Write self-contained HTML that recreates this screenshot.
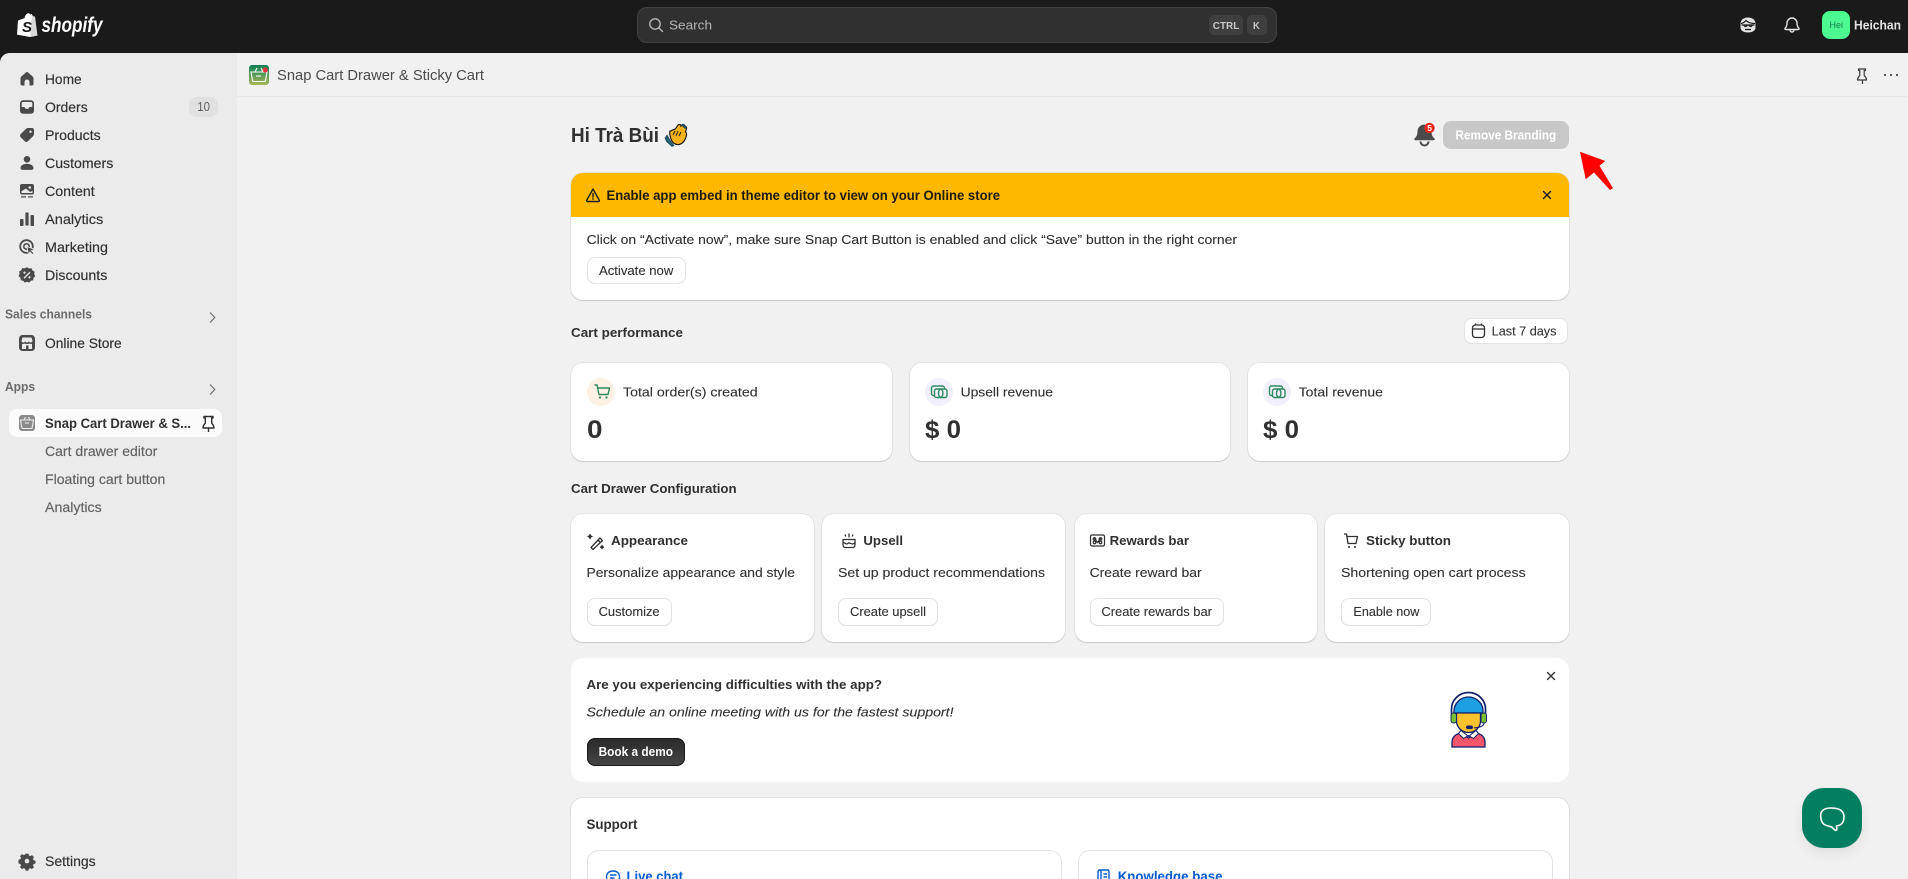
<!DOCTYPE html>
<html lang="en"><head><meta charset="utf-8"><title>Snap Cart Drawer &amp; Sticky Cart</title>
<style>
html,body{margin:0;padding:0;width:1908px;height:879px;overflow:hidden;background:#f1f1f1;font-family:"Liberation Sans",sans-serif}
#root{position:relative;width:1908px;height:879px;overflow:hidden;background:#1a1a1a}
.b{position:absolute;box-sizing:border-box}
.card{background:#fff;border-radius:12px;box-shadow:0 0 0 1px rgba(0,0,0,.05),0 1px 1px rgba(0,0,0,.12)}
.btn{background:#fff;border-radius:8px;box-shadow:inset 0 0 0 1px #e3e3e3,inset 0 -1px 0 #bdbdbd}
svg.o{position:absolute;left:0;top:0}
text{font-family:"Liberation Sans",sans-serif;font-size:13.3px;fill:#303030}
.n{font-size:13.6px;fill:#303030;stroke:#303030;stroke-width:.15px}
.s{fill:#616161;stroke:#616161}
.t{font-weight:700;font-size:13px;fill:#303030}
.d{font-size:13.3px;fill:#303030;stroke:#303030;stroke-width:.1px}
.c{font-size:12.5px;fill:#303030;stroke:#303030;stroke-width:.1px}
.v{font-weight:700;font-size:25px;fill:#303030}
.l{font-weight:700;font-size:13.5px;fill:#005bd3}
</style></head><body>
<div id="root">
<div class="b" style="left:0;top:53px;width:1908px;height:826px;background:#f1f1f1;border-radius:10px 0 0 0;overflow:hidden">
  <div class="b" style="left:0;top:0;width:237px;height:826px;background:#ebebeb"></div>
  <div class="b" style="left:237px;top:43px;width:1671px;height:1px;background:#e8e8e8"></div>
</div>
<div class="b" style="left:637px;top:7px;width:640px;height:36px;background:#303030;border:1px solid #424242;border-radius:10px"></div>
<div class="b" style="left:1209px;top:15px;width:34px;height:20px;background:#3f3f3f;border-radius:5px"></div>
<div class="b" style="left:1247px;top:15px;width:20px;height:20px;background:#3f3f3f;border-radius:5px"></div>
<div class="b" style="left:1822px;top:11px;width:28px;height:28px;background:#4dfa92;border-radius:8px"></div>
<div class="b" style="left:189px;top:97px;width:29px;height:20px;background:#e0e0e0;border-radius:8px"></div>
<div class="b" style="left:9px;top:409px;width:213px;height:28px;background:#fbfbfb;border-radius:8px"></div>

<div class="b" style="left:1443px;top:121px;width:126px;height:28px;background:#c8c8c8;border-radius:8px"></div>

<div class="b card" style="left:571px;top:173px;width:998px;height:127px;overflow:hidden">
  <div class="b" style="left:0;top:0;width:998px;height:44px;background:#ffb800"></div>
</div>
<div class="b btn" style="left:587px;top:257px;width:99px;height:27px"></div>
<div class="b btn" style="left:1464px;top:318px;width:104px;height:26px"></div>

<div class="b card" style="left:571px;top:363px;width:321px;height:98px"></div>
<div class="b card" style="left:910px;top:363px;width:320px;height:98px"></div>
<div class="b card" style="left:1248px;top:363px;width:321px;height:98px"></div>

<div class="b card" style="left:571px;top:514px;width:243px;height:128px"></div>
<div class="b card" style="left:822px;top:514px;width:243px;height:128px"></div>
<div class="b card" style="left:1075px;top:514px;width:242px;height:128px"></div>
<div class="b card" style="left:1325px;top:514px;width:244px;height:128px"></div>
<div class="b btn" style="left:587px;top:598px;width:85px;height:28px"></div>
<div class="b btn" style="left:838px;top:598px;width:100px;height:28px"></div>
<div class="b btn" style="left:1090px;top:598px;width:134px;height:28px"></div>
<div class="b btn" style="left:1341px;top:598px;width:90px;height:28px"></div>

<div class="b" style="left:571px;top:658px;width:998px;height:124px;background:#fff;border-radius:12px"></div>
<div class="b" style="left:587px;top:738px;width:98px;height:28px;border-radius:8px;background:linear-gradient(#2a2a2a,#454545);box-shadow:0 0 0 1px #1a1a1a inset"></div>

<div class="b" style="left:571px;top:798px;width:998px;height:81px;background:#fff;border-radius:12px 12px 0 0;box-shadow:0 0 0 1px rgba(0,0,0,.075)"></div>
<div class="b" style="left:587px;top:850px;width:475px;height:60px;background:#fff;border:1px solid #e3e3e3;border-radius:12px"></div>
<div class="b" style="left:1078px;top:850px;width:475px;height:60px;background:#fff;border:1px solid #e3e3e3;border-radius:12px"></div>

<div class="b" style="left:1802px;top:788px;width:60px;height:60px;background:#037f60;border-radius:22px;box-shadow:0 6px 14px rgba(0,0,0,.07)"></div>

<svg class="o" width="1908" height="879" viewBox="0 0 1908 879" xmlns="http://www.w3.org/2000/svg">
<defs>
<linearGradient id="g" x1="0" y1="0" x2="0" y2="1"><stop offset="0" stop-color="#0d7f58"/><stop offset="1" stop-color="#a9b758"/></linearGradient>
</defs>

<!-- shopify logo -->
<path d="M18 20.5l6.5-2.4c.6-3 2.3-4.8 4-4.8.8 0 1.4.5 1.7 1.200l1.700-.5L37.500 35.500 30 37 17 34.600z" fill="#fff"/>
<path d="M32 14.600L30 37 37.500 35.500 35 16.500l-2-.4z" fill="#d8d8d8"/>
<text x="22" y="32" style="font-size:15px;font-weight:700;font-style:italic;fill:#1a1a1a">S</text>
<text x="41.500" y="32" textLength="61" lengthAdjust="spacingAndGlyphs" style="font-size:21px;font-weight:700;font-style:italic;fill:#fff">shopify</text>

<!-- top bar -->
<g fill="none" stroke="#b5b5b5" stroke-width="1.400"><circle cx="655" cy="24" r="5.200"/><path d="M659 28l3.500 3.500" stroke-linecap="round"/></g>
<text x="669" y="29.500" textLength="43" lengthAdjust="spacingAndGlyphs" style="font-size:13px;fill:#b5b5b5">Search</text>
<text x="1212.800" y="29" textLength="26.500" lengthAdjust="spacingAndGlyphs" style="font-size:10px;font-weight:700;fill:#c8c8c8">CTRL</text>
<text x="1253" y="29" textLength="6.800" lengthAdjust="spacingAndGlyphs" style="font-size:10px;font-weight:700;fill:#c8c8c8">K</text>

<g transform="translate(1738,15)">
<path d="M10 2.500c4.500 0 7.500 2.500 7.500 6.500v3.500c0 3-3 5-7.500 5s-7.500-2-7.500-5V9c0-4 3-6.500 7.500-6.500z" fill="#e3e3e3"/>
<path d="M3 8.500c3-.3 4-2 5-3 2 2 5 3 9 3" fill="none" stroke="#1a1a1a" stroke-width="1.200"/>
<path d="M3.500 10h13M6 10.500a1.800 1.800 0 0 0 3.200 0M11 10.500a1.800 1.800 0 0 0 3.200 0M7 14.500h6" fill="none" stroke="#1a1a1a" stroke-width="1.300"/>
</g>
<g transform="translate(1782,15)" fill="none" stroke="#e3e3e3" stroke-width="1.400" stroke-linejoin="round">
<path d="M10 3a5 5 0 0 0-5 5c0 2.500-.6 4-1.900 5.300-.4.400-.1 1.200.5 1.200h12.800c.6 0 .9-.8.5-1.200C15.600 12 15 10.500 15 8a5 5 0 0 0-5-5z"/><path d="M8 15a2 2 0 0 0 4 0"/>
</g>
<text x="1829.500" y="28" textLength="13.500" lengthAdjust="spacingAndGlyphs" style="font-size:9.500px;fill:#1c7a50">Hei</text>
<text x="1854" y="29.500" textLength="47" lengthAdjust="spacingAndGlyphs" style="font-size:12.500px;font-weight:700;fill:#e3e3e3">Heichan</text>

<!-- nav text -->
<text class="n" x="45" y="84" textLength="36.700" lengthAdjust="spacingAndGlyphs">Home</text>
<text class="n" x="45" y="112" textLength="42.700" lengthAdjust="spacingAndGlyphs">Orders</text>
<text class="n" x="45" y="140" textLength="55.700" lengthAdjust="spacingAndGlyphs">Products</text>
<text class="n" x="45" y="168" textLength="68.300" lengthAdjust="spacingAndGlyphs">Customers</text>
<text class="n" x="45" y="196" textLength="49.700" lengthAdjust="spacingAndGlyphs">Content</text>
<text class="n" x="45" y="224" textLength="58.300" lengthAdjust="spacingAndGlyphs">Analytics</text>
<text class="n" x="45" y="252" textLength="63" lengthAdjust="spacingAndGlyphs">Marketing</text>
<text class="n" x="45" y="280" textLength="62.300" lengthAdjust="spacingAndGlyphs">Discounts</text>
<text x="197.300" y="111" textLength="12.700" lengthAdjust="spacingAndGlyphs" style="font-size:12.500px;fill:#616161">10</text>
<text x="5" y="318.500" textLength="87" lengthAdjust="spacingAndGlyphs" style="font-size:12.500px;font-weight:700;fill:#6b6b6b">Sales channels</text>
<text class="n" x="45" y="348" textLength="76.700" lengthAdjust="spacingAndGlyphs">Online Store</text>
<text x="5" y="391" textLength="30" lengthAdjust="spacingAndGlyphs" style="font-size:12.500px;font-weight:700;fill:#6b6b6b">Apps</text>
<text x="45" y="428" textLength="146" lengthAdjust="spacingAndGlyphs" style="font-size:13.500px;font-weight:700;fill:#303030">Snap Cart Drawer &amp; S...</text>
<text class="n s" x="45" y="456" textLength="112.300" lengthAdjust="spacingAndGlyphs">Cart drawer editor</text>
<text class="n s" x="45" y="484" textLength="120.300" lengthAdjust="spacingAndGlyphs">Floating cart button</text>
<text class="n s" x="45" y="512" textLength="56.700" lengthAdjust="spacingAndGlyphs">Analytics</text>
<text class="n" x="45" y="866" textLength="50.700" lengthAdjust="spacingAndGlyphs">Settings</text>

<!-- nav icons -->
<g fill="#4a4a4a">
<path transform="translate(17,69)" d="M8.900 3.500a1.700 1.700 0 0 1 2.200 0l4.300 3.700c.7.600 1.100 1.500 1.100 2.400v5.400c0 .8-.7 1.500-1.500 1.500h-2.500v-3.500a2.500 2.500 0 0 0-5 0v3.500H5c-.8 0-1.500-.7-1.500-1.500V9.600c0-.9.400-1.800 1.100-2.400z"/>
<path transform="translate(17,97)" fill-rule="evenodd" d="M6 3.300h8a3 3 0 0 1 3 3v7.400a3 3 0 0 1-3 3H6a3 3 0 0 1-3-3V6.300a3 3 0 0 1 3-3zM6 5a1.300 1.300 0 0 0-1.300 1.300V10H7c.5 0 .9.300 1 .8.300.8 1 1.200 2 1.200s1.700-.4 2-1.200c.1-.5.500-.8 1-.8h2.300V6.300A1.300 1.300 0 0 0 14 5z"/>
<path transform="translate(17,125)" fill-rule="evenodd" d="M11 3h4a2 2 0 0 1 2 2v4a3 3 0 0 1-.9 2.100l-5.200 5.200a2.200 2.200 0 0 1-3.100 0l-4.100-4.100a2.200 2.200 0 0 1 0-3.100l5.200-5.200A3 3 0 0 1 11 3zm2.500 2.500a1.200 1.200 0 1 0 0 2.400 1.200 1.200 0 0 0 0-2.400z"/>
<path transform="translate(17,153)" d="M10 3a3.300 3.300 0 1 1 0 6.600A3.300 3.300 0 0 1 10 3zM10 10.800c3.700 0 6.500 1.900 6.500 4.200 0 1.100-.8 1.900-1.900 1.900H5.400C4.300 16.900 3.500 16.100 3.500 15c0-2.300 2.800-4.200 6.500-4.200z"/>
<path transform="translate(17,181)" fill-rule="evenodd" d="M5 3h10a2 2 0 0 1 2 2v6.500a2 2 0 0 1-2 2H5a2 2 0 0 1-2-2V5a2 2 0 0 1 2-2zm7.800 2.200a1.300 1.300 0 1 0 0 2.600 1.300 1.300 0 0 0 0-2.600zM4.500 10.200v1.300c0 .3.200.5.500.5h10c.3 0 .5-.2.500-.5V9.800L13 11l-4-3.500zM4 15.200h5v1.300H4zM11 15.200h5v1.300h-5z"/>
<path transform="translate(17,209)" d="M9 3.500h2c.4 0 .6.300.6.600v11.800c0 .4-.2.600-.6.600H9c-.4 0-.6-.2-.6-.6V4.100c0-.3.200-.6.600-.6zM14.400 6h1.700c.5 0 .9.400.9.900v9.200c0 .5-.4.900-.9.900h-1.700c-.5 0-.9-.4-.9-.9V6.900c0-.5.400-.9.900-.9zM3.900 10h1.700c.5 0 .9.400.9.900v5.200c0 .5-.4.900-.9.900H3.900c-.5 0-.9-.4-.9-.9v-5.200c0-.5.400-.9.900-.9z"/>
<g transform="translate(17,237)"><circle cx="9.500" cy="9.500" r="6.300" fill="none" stroke="#4a4a4a" stroke-width="1.800"/><circle cx="9.500" cy="9.500" r="2.700" fill="none" stroke="#4a4a4a" stroke-width="1.600"/><path d="M9.800 9.500l7.600 2.800-3 1.300 2.700 2.700-1.400 1.400-2.700-2.700-1.300 3z" stroke="#ebebeb" stroke-width=".8"/></g>
<path transform="translate(17,265)" fill-rule="evenodd" d="M10 2.300l2.100 1.200 2.400-.2 1 2.200 2.100 1.100-.4 2.400 1 2.200-1.700 1.700-.3 2.400-2.400.4-1.500 1.900-2.300-.8-2.300.8-1.500-1.900-2.400-.4-.3-2.400L1.600 11l1-2.200L2.200 6.400l2.100-1.100 1-2.200 2.400.2zM12.500 6.800l-6 6 .9.900 6-6zM7.500 6.500a1.100 1.100 0 1 0 0 2.200 1.100 1.100 0 0 0 0-2.200zM12.500 11.200a1.100 1.100 0 1 0 0 2.200 1.100 1.100 0 0 0 0-2.200z"/>
<path transform="translate(17,851)" fill-rule="evenodd" d="M8.600 2.600h2.800l.5 1.900 1.400.6 1.700-1 2 2-1 1.700.6 1.400 1.900.5v2.800l-1.900.5-.6 1.400 1 1.700-2 2-1.700-1-1.400.6-.5 1.900H8.600l-.5-1.900-1.400-.6-1.700 1-2-2 1-1.700-.6-1.400-1.900-.5V8.700l1.900-.5.6-1.400-1-1.700 2-2 1.700 1 1.400-.6zM10 7.800a2.300 2.300 0 1 0 0 4.600 2.300 2.300 0 0 0 0-4.600z"/>
<path transform="translate(17,333)" fill-rule="evenodd" d="M5.500 2h9A3.500 3.500 0 0 1 18 5.500v9a3.500 3.500 0 0 1-3.500 3.500h-9A3.500 3.500 0 0 1 2 14.500v-9A3.500 3.500 0 0 1 5.500 2zM5.500 4.500l-1 3.300c0 1 .9 1.700 1.800 1.700s1.800-.7 1.800-1.400c0 .7.800 1.400 1.900 1.400s1.900-.7 1.900-1.400c0 .7.900 1.400 1.800 1.400s1.800-.7 1.800-1.700l-1-3.300zM5 10.800V16h4v-3.500h2.500V16H15v-5.200c-.9.300-2 .1-2.700-.3-.7.400-1.500.5-2.300.5s-1.600-.1-2.300-.5c-.7.400-1.800.6-2.700.3z"/>
</g>
<path d="M210 312.500l4.800 5-4.800 5M210 384.500l4.800 5-4.800 5" fill="none" stroke="#6b6b6b" stroke-width="1.200"/>

<!-- active app icon -->
<rect x="19" y="415" width="16" height="16" rx="3" fill="#8a8a8a"/>
<g transform="translate(0,11)" fill="none" stroke="#ececec" stroke-width="1.100"><path d="M20.500 409h13l-1.300 7.500c-.1.600-.5 1-1 1h-8.400c-.5 0-.9-.4-1-1z"/><path d="M24 409l1.500-3M30 409l-1.500-3"/><path d="M25 412h4"/></g>
<g transform="translate(0,11)" fill="none" stroke="#303030" stroke-width="1.400" stroke-linejoin="round"><path d="M204.500 417h-1.500c0-2.600 1.500-3.800 2.300-4.800V407h-1.300v-1.500h9v1.500h-1.300v5.200c.8 1 2.300 2.200 2.300 4.800h-9.500zM208.500 417.500v3.500"/></g>

<!-- header -->
<rect x="249" y="65" width="20" height="20" rx="3" fill="url(#g)"/>
<g fill="none" stroke="#fff" stroke-width="1.100"><path d="M251 72h16l-1.500 8.500c-.1.600-.6 1-1.100 1h-10.800c-.5 0-1-.4-1.100-1z"/><path d="M255 72l2-4M263 72l-2-4"/><path d="M256 76h5"/></g>
<circle cx="265.300" cy="70" r="2.500" fill="#e8343a"/>
<text x="277" y="80" textLength="207" lengthAdjust="spacingAndGlyphs" style="font-size:14.500px;fill:#4a4a4a">Snap Cart Drawer &amp; Sticky Cart</text>
<g fill="none" stroke="#3a3a3a" stroke-width="1.200" stroke-linejoin="round"><path d="M1858.500 80h-1c0-2.500 1.500-3.500 2.300-4.500v-5h-1.300V69h7v1.500h-1.300v5c.8 1 2.300 2 2.300 4.500h-8zM1862.500 80.500v3.500"/></g>
<g fill="#4a4a4a"><circle cx="1885" cy="75" r="1.100"/><circle cx="1891" cy="75" r="1.100"/><circle cx="1897" cy="75" r="1.100"/></g>

<!-- greeting -->
<text x="571" y="142" textLength="88" lengthAdjust="spacingAndGlyphs" style="font-size:20px;font-weight:700;fill:#303030">Hi Trà Bùi</text>
<g>
<path d="M671 131c2-2 4-1 5-3l2-3c1-1 3-.5 3 1l1-1c1.500-1 3 0 3 1.500 1 0 2 1 1.500 2.300l-1 3c1 .8 1.200 2 1 3.200-.5 4-3 8.500-7.500 9.500-4 .5-7-2-8-5.500-.7-2.500-2-5-1-8z" fill="#f9b21a" stroke="#1f1f1f" stroke-width="1.200"/>
<path d="M667 135l4 7 3 3.500-2 1-5.500-5-1.500-3.500zM683 124l3.500 3.500-1.500 1-3.500-3.500z" fill="#22657c" stroke="#16323c" stroke-width=".6"/>
<path d="M675 131l-2 4M678 131l-2 5M681 132l-2 4" stroke="#1f1f1f" stroke-width="1" fill="none"/>
</g>

<!-- bell + remove branding -->
<path d="M1424.500 124.500a7 7 0 0 0-7 7c0 3-.9 5.300-3 7-.6.600-.2 1.700.7 1.700h18.600c.9 0 1.300-1.100.7-1.700-2.100-1.700-3-4-3-7a7 7 0 0 0-7-7z" fill="#4a4a4a"/>
<path d="M1420.500 141.500a4 4 0 0 0 8 0" fill="none" stroke="#4a4a4a" stroke-width="2"/>
<circle cx="1429.500" cy="128" r="5.200" fill="#e8261c"/>
<text x="1427.300" y="131" style="font-size:8.500px;font-weight:700;fill:#fff">5</text>
<text x="1455.500" y="139.500" textLength="100.700" lengthAdjust="spacingAndGlyphs" style="font-size:12.500px;font-weight:700;fill:#fff">Remove Branding</text>
<polygon points="1580,151.700 1605.300,161 1599.500,165.700 1613,188.300 1610,190 1594,172.500 1585.700,179.300" fill="#fe0000"/>

<!-- banner -->
<g fill="none" stroke="#1f1f1f" stroke-width="1.400" stroke-linejoin="round"><path d="M593 189l-6.300 11.300c-.3.600.1 1.200.7 1.200h11.200c.6 0 1-.6.700-1.200z"/><path d="M593 193.500v3.500M593 198.700v.6" stroke-linecap="round"/></g>
<text x="606.500" y="200" textLength="393.500" lengthAdjust="spacingAndGlyphs" style="font-size:13.500px;font-weight:700;fill:#1f1a0a">Enable app embed in theme editor to view on your Online store</text>
<path d="M1543.500 191.500l7 7M1550.500 191.500l-7 7" stroke="#1a1a1a" stroke-width="1.400" stroke-linecap="round"/>
<text class="d" x="586.600" y="244" textLength="650.400" lengthAdjust="spacingAndGlyphs">Click on “Activate now”, make sure Snap Cart Button is enabled and click “Save” button in the right corner</text>
<text class="c" x="599" y="275" textLength="74.300" lengthAdjust="spacingAndGlyphs">Activate now</text>

<!-- cart performance -->
<text class="t" x="571" y="337" textLength="112" lengthAdjust="spacingAndGlyphs">Cart performance</text>
<g fill="none" stroke="#303030" stroke-width="1.300"><rect x="1472.500" y="325" width="12" height="12.500" rx="3"/><path d="M1472.500 329h12M1475.500 323.500v1.500M1481.500 323.500v1.500"/></g>
<text class="c" x="1491.700" y="335.500" textLength="64.800" lengthAdjust="spacingAndGlyphs">Last 7 days</text>

<ellipse cx="601" cy="392" rx="14" ry="14" fill="#fdf1e4"/>
<g fill="none" stroke="#2e8a5f" stroke-width="1.400"><path d="M594.500 385h2.500l2 9.500h9l1.500-6.500h-12"/></g><circle cx="600" cy="397.500" r="1.100" fill="#2e8a5f"/><circle cx="606.500" cy="397.500" r="1.100" fill="#2e8a5f"/>
<text class="d" x="623" y="396.500" textLength="134.600" lengthAdjust="spacingAndGlyphs">Total order(s) created</text>
<text class="v" x="587" y="438" textLength="15.500" lengthAdjust="spacingAndGlyphs">0</text>

<ellipse cx="939" cy="392" rx="14" ry="14" fill="#f1f0fb"/>
<g fill="none" stroke="#2e8a5f" stroke-width="1.400"><rect x="931.500" y="386" width="13" height="9.500" rx="2"/><rect x="934.500" y="389" width="12.500" height="8.500" rx="2" fill="#f1f0fb"/><ellipse cx="940.700" cy="393.200" rx="2.200" ry="4"/></g>
<text class="d" x="960.600" y="396.500" textLength="92.400" lengthAdjust="spacingAndGlyphs">Upsell revenue</text>
<text class="v" x="925" y="438" textLength="36" lengthAdjust="spacingAndGlyphs">$ 0</text>

<ellipse cx="1277" cy="392" rx="14" ry="14" fill="#f1f0fb"/>
<g fill="none" stroke="#2e8a5f" stroke-width="1.400"><rect x="1269.500" y="386" width="13" height="9.500" rx="2"/><rect x="1272.500" y="389" width="12.500" height="8.500" rx="2" fill="#f1f0fb"/><ellipse cx="1278.700" cy="393.200" rx="2.200" ry="4"/></g>
<text class="d" x="1298.600" y="396.500" textLength="84.400" lengthAdjust="spacingAndGlyphs">Total revenue</text>
<text class="v" x="1263" y="438" textLength="36" lengthAdjust="spacingAndGlyphs">$ 0</text>

<!-- config -->
<text class="t" x="571" y="493" textLength="165.600" lengthAdjust="spacingAndGlyphs">Cart Drawer Configuration</text>

<g fill="none" stroke="#303030" stroke-width="1.300" stroke-linejoin="round"><path d="M591 547.500l9-9.500 2.500 2.500-9.500 9zM598 540l2.500 2.500M590 534.500l.5 1.500 1.500.5-1.500.5-.5 1.500-.5-1.500-1.500-.5 1.500-.5zM602 545.500l.4 1.200 1.200.4-1.200.4-.4 1.200-.4-1.200-1.200-.4 1.200-.4z"/></g>
<text class="t" x="611" y="545" textLength="77" lengthAdjust="spacingAndGlyphs">Appearance</text>
<text class="d" x="586.500" y="577" textLength="208.500" lengthAdjust="spacingAndGlyphs">Personalize appearance and style</text>
<text class="c" x="598.600" y="616" textLength="61" lengthAdjust="spacingAndGlyphs">Customize</text>

<g fill="none" stroke="#303030" stroke-width="1.300" stroke-linejoin="round"><path d="M843 539.500h12v5.500a2.500 2.500 0 0 1-2.500 2.500h-7a2.500 2.500 0 0 1-2.500-2.500zM843 543c1.500-1 2.500 1 3.500 1s2-1.500 3-1 2 1 3 1 1.500-1 2.500-1M849 533.500v4M845 534.500l.8 2M853 534.500l-.8 2"/></g>
<text class="t" x="863.400" y="545" textLength="39.600" lengthAdjust="spacingAndGlyphs">Upsell</text>
<text class="d" x="838" y="577" textLength="207" lengthAdjust="spacingAndGlyphs">Set up product recommendations</text>
<text class="c" x="850" y="616" textLength="76" lengthAdjust="spacingAndGlyphs">Create upsell</text>

<g fill="none" stroke="#303030" stroke-width="1.200"><rect x="1090.500" y="535" width="14" height="11" rx="1.500"/><path d="M1094 538l4 5M1101 538l-4 5"/><circle cx="1094.500" cy="539" r="1.300"/><circle cx="1100.500" cy="539" r="1.300"/><circle cx="1094.500" cy="542.500" r="1.300"/><circle cx="1100.500" cy="542.500" r="1.300"/></g>
<text class="t" x="1109.600" y="545" textLength="79.400" lengthAdjust="spacingAndGlyphs">Rewards bar</text>
<text class="d" x="1089.600" y="577" textLength="112" lengthAdjust="spacingAndGlyphs">Create reward bar</text>
<text class="c" x="1101.400" y="616" textLength="110.600" lengthAdjust="spacingAndGlyphs">Create rewards bar</text>

<g fill="none" stroke="#303030" stroke-width="1.300" stroke-linejoin="round"><path d="M1344 534h2.500l1.500 9.500h8l1.500-7h-10.500"/></g><circle cx="1349" cy="547" r="1" fill="#303030"/><circle cx="1355" cy="547" r="1" fill="#303030"/>
<text class="t" x="1366" y="545" textLength="85" lengthAdjust="spacingAndGlyphs">Sticky button</text>
<text class="d" x="1341" y="577" textLength="184.700" lengthAdjust="spacingAndGlyphs">Shortening open cart process</text>
<text class="c" x="1353.400" y="616" textLength="66" lengthAdjust="spacingAndGlyphs">Enable now</text>

<!-- promo -->
<text class="t" x="586.500" y="689" textLength="295.500" lengthAdjust="spacingAndGlyphs">Are you experiencing difficulties with the app?</text>
<text class="d" x="586.500" y="716.500" textLength="367" lengthAdjust="spacingAndGlyphs" style="font-style:italic">Schedule an online meeting with us for the fastest support!</text>
<text x="598.600" y="756" textLength="74.400" lengthAdjust="spacingAndGlyphs" style="font-size:12.500px;font-weight:700;fill:#fff">Book a demo</text>
<path d="M1547.500 672.500l7 7M1554.500 672.500l-7 7" stroke="#303030" stroke-width="1.400" stroke-linecap="round"/>

<g>
<path d="M1451.500 716v-7a17 16.500 0 0 1 34 0v7" fill="#fff" stroke="#12206b" stroke-width="1.700"/>
<path d="M1454 711a14.500 14 0 0 1 29 0v2h-29z" fill="#1f9fe3" stroke="#12206b" stroke-width="1.300"/>
<path d="M1456.500 713h24v8c0 6-5 11.500-12 11.500s-12-5.500-12-11.500z" fill="#fcc22e" stroke="#12206b" stroke-width="1.300"/>
<rect x="1451" y="713" width="5.500" height="10" rx="2.500" fill="#7ac12f" stroke="#12206b" stroke-width="1"/>
<rect x="1481" y="713" width="5.500" height="10" rx="2.500" fill="#7ac12f" stroke="#12206b" stroke-width="1"/>
<path d="M1484 723c0 3-4 4.500-10 4.800" fill="none" stroke="#12206b" stroke-width="1.100"/>
<rect x="1466" y="725.500" width="7" height="3.600" rx="1.800" fill="#12206b"/>
<path d="M1452 747v-4.500c0-5 3-8 8-9.500l8.500 5 8.500-5c5 1.500 8 4.500 8 9.500v4.500z" fill="#f5566b" stroke="#12206b" stroke-width="1.300"/>
<path d="M1461 730.500l7.500 6 7.500-6 2.500 3-5 5-5-3-5 3-5-5z" fill="#fff" stroke="#12206b" stroke-width="1"/>
</g>

<!-- support -->
<text class="t" x="586.500" y="829" textLength="51" lengthAdjust="spacingAndGlyphs" style="font-size:13.500px">Support</text>
<g fill="none" stroke="#005bd3" stroke-width="1.400" stroke-linejoin="round"><path d="M613 871c-4 0-6.500 2.500-6.500 6 0 1.500.5 3 1.500 4l-.5 3 3-1c1 .4 1.700.5 2.500.5 4 0 6.500-2.500 6.500-6.500s-2.500-6-6.500-6zM610 875h6.500M610 878h4.500"/></g>
<text class="l" x="626.500" y="881" textLength="56.500" lengthAdjust="spacingAndGlyphs">Live chat</text>
<g fill="none" stroke="#005bd3" stroke-width="1.400"><rect x="1098" y="870" width="11" height="13" rx="1.500"/><path d="M1101 870v13M1103.500 874h3.500M1103.500 877h3.500"/></g>
<text class="l" x="1117.700" y="881" textLength="104.800" lengthAdjust="spacingAndGlyphs">Knowledge base</text>

<!-- chat widget -->
<path d="M1821 818.500c-1.200-5.500.5-10.500 10-10.500s13 3.500 13 9-3 8.500-7.500 9c.4 1.500.6 2.500.2 4l-1.400.4-3.700-3.400-5.500-1.600c-2.600-.8-4.500-3.500-5.100-6.400z" fill="none" stroke="#fff" stroke-width="1.600" stroke-linejoin="round"/>
</svg>
</div>
</body></html>
